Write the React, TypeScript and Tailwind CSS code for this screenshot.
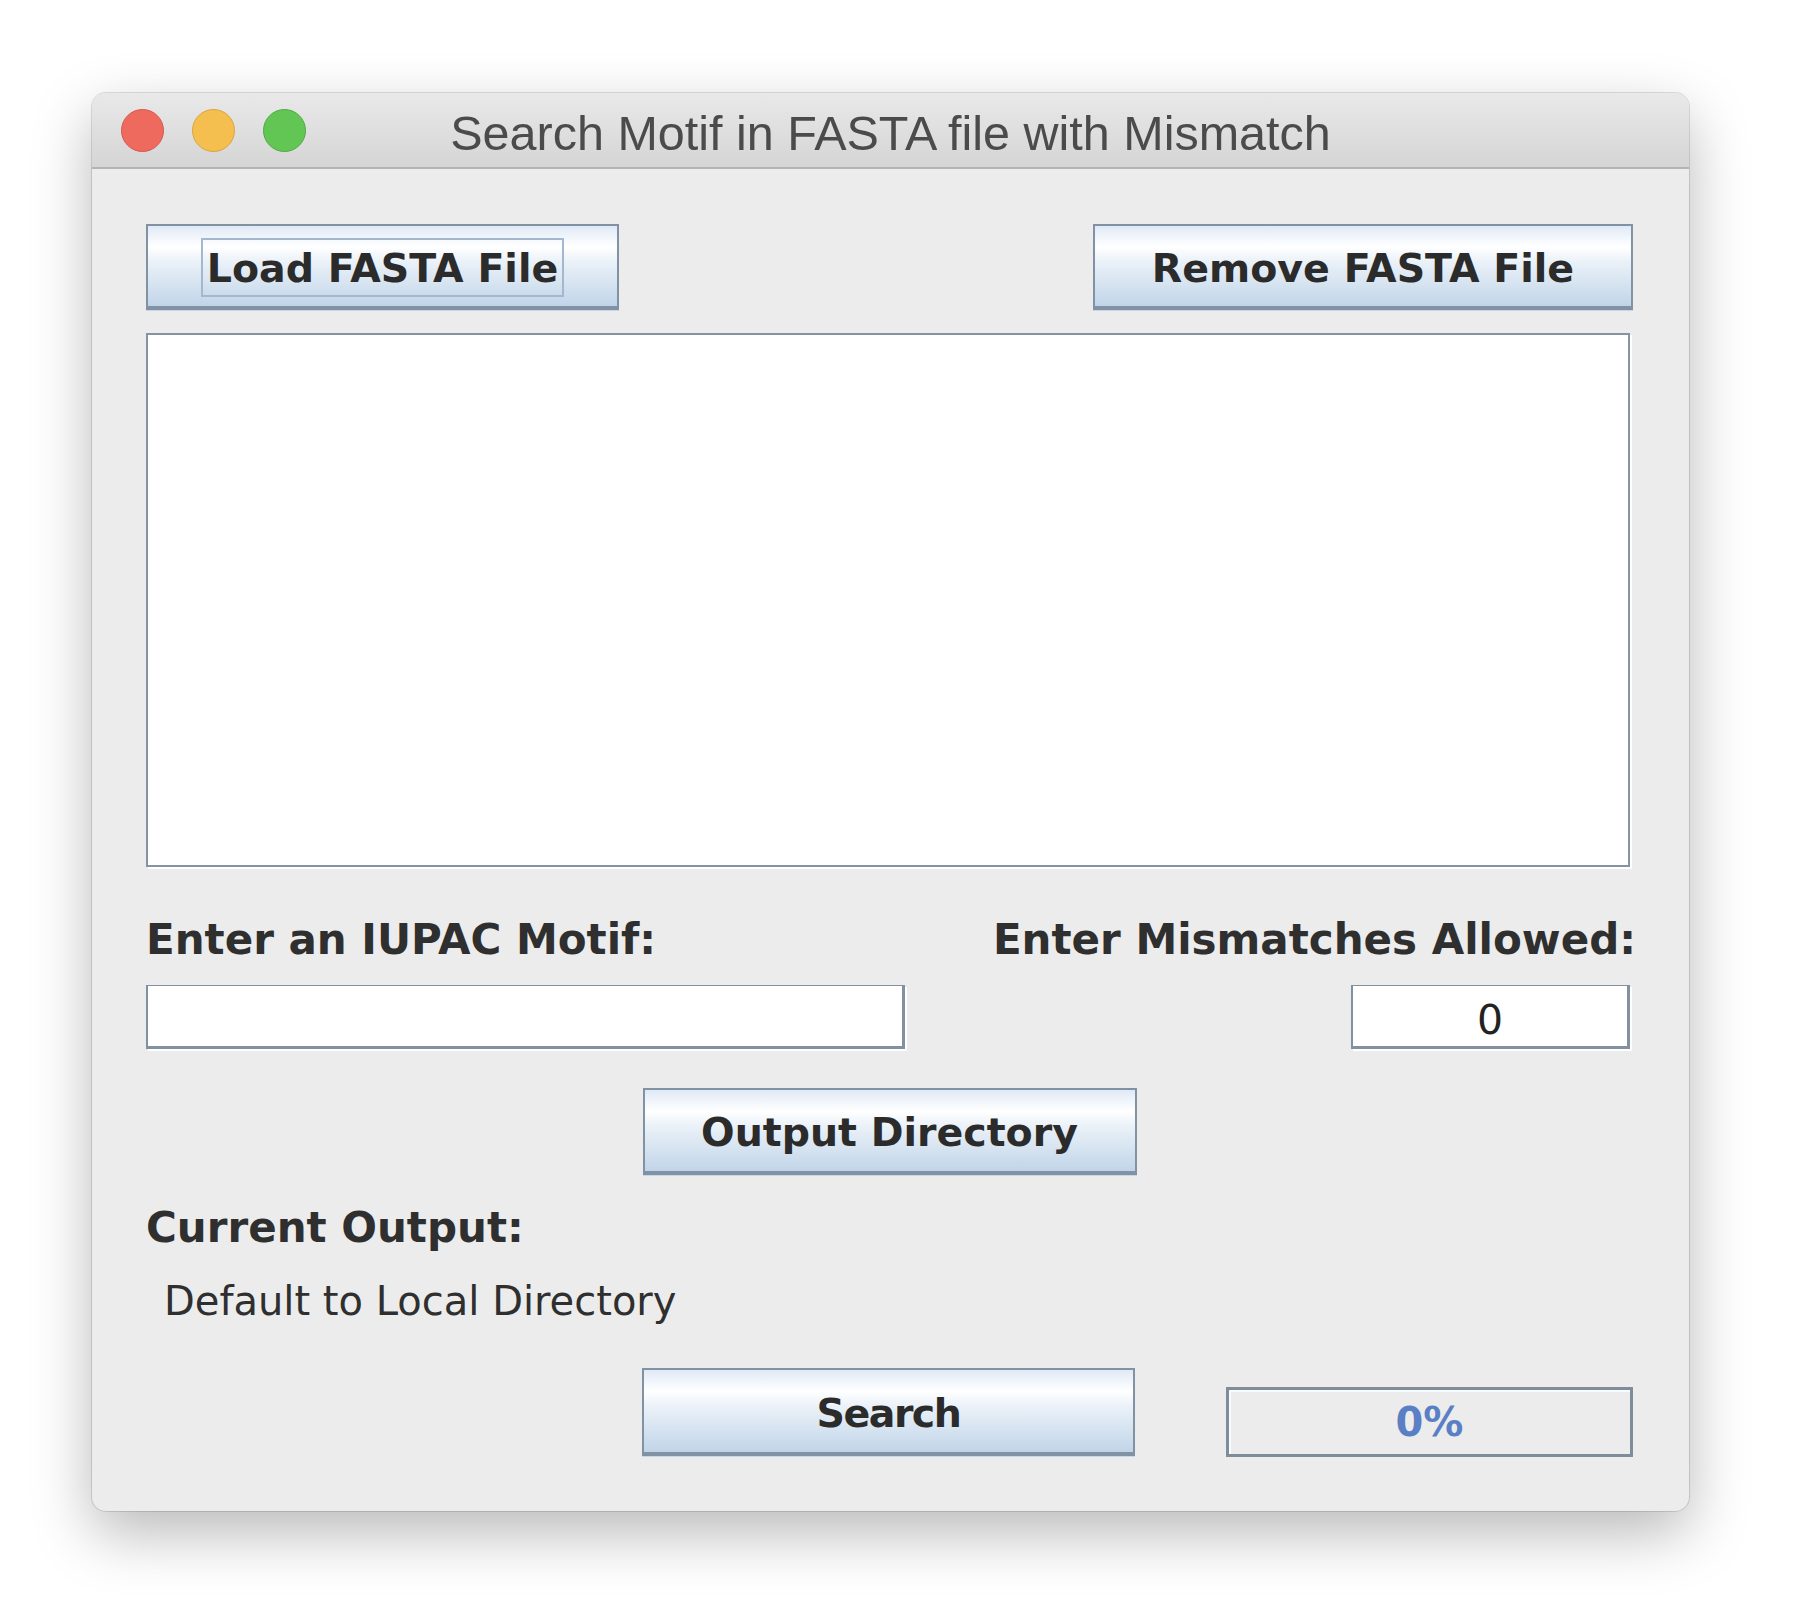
import React from "react";

const btnBase =
  "flex items-center justify-center border-2 border-b-[4px] border-[#8192a4] shadow-[0_1px_0_0_#c4d7ec] bg-[linear-gradient(to_bottom,#dfe9f5_0%,#f6f9fd_18%,#ffffff_26%,#eaf1f8_45%,#d4e2f0_75%,#c1d4e8_100%)] text-[#2b2b2b] font-bold text-[39.5px] leading-none pt-[5px]";

const fontStack = { fontFamily: '"DejaVu Sans", "Liberation Sans", sans-serif' };

export default function App() {
  return (
    <div
      className="w-[1800px] h-[1620px] bg-white pt-[93px] pl-[92px]"
      style={fontStack}
    >
      <div className="w-[1597px] h-[1418px] rounded-[14px] bg-[#ececec] overflow-hidden flex flex-col shadow-[0_22px_60px_rgba(0,0,0,0.28),0_0_0_1px_rgba(0,0,0,0.12)]">
        {/* Title bar */}
        <div className="h-[76px] shrink-0 grid grid-cols-[1fr_auto_1fr] items-center bg-[linear-gradient(to_bottom,#e9e9e9,#d5d5d5)] border-b-2 border-[#b4b4b4]">
          <div className="flex items-center gap-[28px] pl-[29px]">
            <span className="w-[43px] h-[43px] rounded-full bg-[#ee6a5f] border border-[#d5574c]" />
            <span className="w-[43px] h-[43px] rounded-full bg-[#f5bf4f] border border-[#d9a340]" />
            <span className="w-[43px] h-[43px] rounded-full bg-[#62c655] border border-[#50a944]" />
          </div>
          <div
            className="text-[48.5px] text-[#4b4b4b] leading-none pt-[6px]"
            style={{ fontFamily: '"Liberation Sans", Arial, sans-serif' }}
          >
            Search Motif in FASTA file with Mismatch
          </div>
          <div />
        </div>

        {/* Content */}
        <div className="flex flex-col pl-[54px] pr-[56px] pt-[55px]">
          {/* Row 1 */}
          <div className="flex justify-between h-[86px]">
            <button className={`${btnBase} w-[473px] h-[86px]`}>
              <span className="border-2 border-[#a3b7cf] px-[4px] h-[59px] flex items-center -mt-[3px] pt-[3px]">
                Load FASTA File
              </span>
            </button>
            <button className={`${btnBase} w-[540px] h-[86px]`}>Remove FASTA File</button>
          </div>

          {/* Text area */}
          <div className="mt-[23px] w-[1484px] h-[534px] bg-white border-2 border-[#8593a3] shadow-[2px_2px_0_0_#ffffff]" />

          {/* Labels */}
          <div className="mt-[48px] h-[50px] flex items-center justify-between -mr-[3px] text-[42px] font-bold text-[#2f2f2f] leading-none">
            <span>Enter an IUPAC Motif:</span>
            <span>Enter Mismatches Allowed:</span>
          </div>

          {/* Inputs */}
          <div className="mt-[20px] flex justify-between h-[64px] mr-[3px]">
            <div className="w-[759px] h-[64px] bg-white border-l-2 border-t border-r-[3px] border-b-[3px] border-[#8191a2] shadow-[2px_2px_0_0_#ffffff]" />
            <div className="w-[279px] h-[64px] bg-white border-l-2 border-t border-r-[3px] border-b-[3px] border-[#8191a2] shadow-[2px_2px_0_0_#ffffff] flex items-center justify-center text-[41px] text-[#222] leading-none pt-[8px]">
              0
            </div>
          </div>

          {/* Output directory */}
          <div className="mt-[39px] flex justify-center">
            <button className={`${btnBase} w-[494px] h-[87px]`}>Output Directory</button>
          </div>

          <div className="mt-[28px] h-[50px] flex items-center text-[42px] font-bold text-[#2f2f2f] leading-none">
            Current Output:
          </div>
          <div className="mt-[23px] h-[50px] flex items-center ml-[18px] text-[40px] text-[#2f2f2f] leading-none">
            Default to Local Directory
          </div>

          {/* Bottom row */}
          <div className="mt-[42px] flex items-start">
            <button className={`${btnBase} ml-[496px] w-[494px] h-[88px] tracking-[-1.5px]`}>Search</button>
            <div className="ml-[91px] mt-[19px] w-[408px] h-[70px] border-[3px] border-[#7e8c9b] bg-[#ececec] shadow-[inset_2px_2px_0_0_#f8fbff] flex items-center justify-center text-[40px] font-bold text-[#5b7fc5] leading-none">
              0%
            </div>
          </div>
        </div>
      </div>
    </div>
  );
}
